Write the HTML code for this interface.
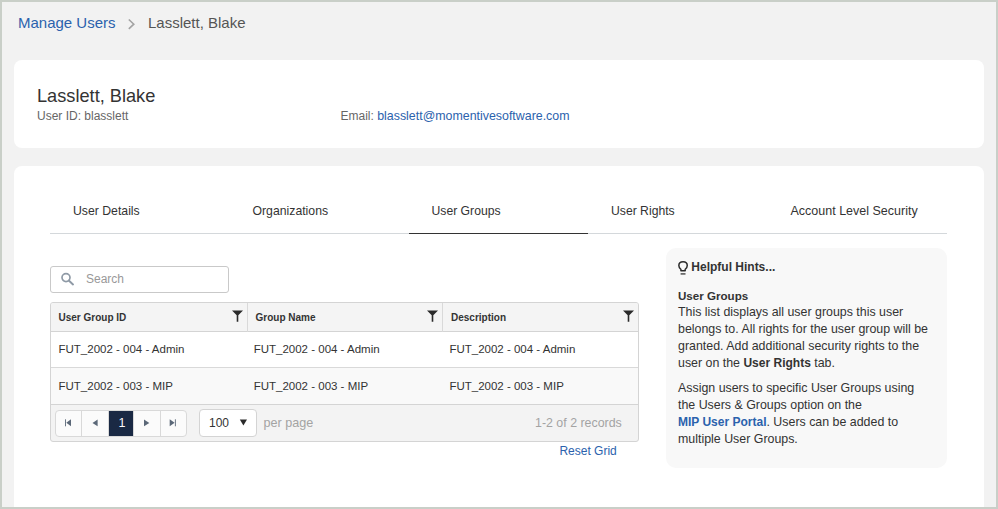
<!DOCTYPE html>
<html><head><meta charset="utf-8">
<style>
*{margin:0;padding:0;box-sizing:border-box}
html,body{width:998px;height:509px;overflow:hidden}
body{font-family:"Liberation Sans",sans-serif;background:#c9cfc8;position:relative;color:#333}
.a{position:absolute;white-space:nowrap}
#page{position:absolute;left:2px;top:2px;width:994px;height:505px;background:#f2f2f2;overflow:hidden}
.card{position:absolute;background:#fff;border-radius:8px}
.link{color:#2b62ad}
.tab{position:absolute;top:205px;font-size:12.5px;line-height:12.5px;color:#333}
.th{font-size:10px;line-height:10px;font-weight:bold;color:#333}
.td{font-size:11.5px;line-height:11.5px;color:#333}
.hint{font-size:12.4px;line-height:17px;color:#333}
.hint b{font-size:12px}
</style></head><body>
<div id="page"></div>

<!-- breadcrumb -->
<div class="a link" style="left:18px;top:15.3px;font-size:15px;line-height:15px">Manage Users</div>
<svg class="a" style="left:127px;top:18px" width="10" height="12" viewBox="0 0 10 12"><path d="M1.8 1.5 L6.8 6.2 L1.8 10.9" fill="none" stroke="#a3a3a3" stroke-width="1.6"/></svg>
<div class="a" style="left:148px;top:15.3px;font-size:15px;line-height:15px;color:#555">Lasslett, Blake</div>

<!-- top card -->
<div class="card" style="left:14px;top:60px;width:970px;height:88px"></div>
<div class="a" style="left:37px;top:86.8px;font-size:18.2px;line-height:18px;color:#333">Lasslett, Blake</div>
<div class="a" style="left:37px;top:109.8px;font-size:12px;line-height:12px;color:#666">User ID: blasslett</div>
<div class="a" style="left:340.5px;top:109.8px;font-size:12px;line-height:12px;color:#666">Email: <span class="link" style="font-size:12.4px">blasslett@momentivesoftware.com</span></div>

<!-- main card -->
<div class="card" style="left:14px;top:166px;width:970px;height:360px"></div>

<!-- tabs -->
<div class="a" style="left:50px;top:233px;width:897px;height:1px;background:#d4d8db"></div>
<div class="a" style="left:409px;top:233px;width:179px;height:1px;background:#333"></div>
<div class="tab a" style="left:73px;font-size:12.25px">User Details</div>
<div class="tab a" style="left:252.5px;font-size:12.25px">Organizations</div>
<div class="tab a" style="left:431.5px;font-size:12.2px">User Groups</div>
<div class="tab a" style="left:611px;font-size:12.2px">User Rights</div>
<div class="tab a" style="left:790.5px">Account Level Security</div>

<!-- search -->
<div class="a" style="left:50px;top:266px;width:179px;height:27px;border:1px solid #c9c9c9;border-radius:3px;background:#fff"></div>
<svg class="a" style="left:60px;top:272px" width="16" height="14" viewBox="0 0 16 14"><circle cx="6" cy="5.6" r="4" fill="none" stroke="#8f9aa6" stroke-width="1.7"/><path d="M8.8 8.6 L13 12.4" stroke="#8f9aa6" stroke-width="2" stroke-linecap="round"/></svg>
<div class="a" style="left:86px;top:272.8px;font-size:12px;line-height:12px;color:#999">Search</div>

<!-- table -->
<div class="a" style="left:50px;top:302px;width:589px;height:140px;border:1px solid #d4d4d4;border-radius:3px;background:#f3f3f3;overflow:hidden">
  <div class="a" style="left:0;top:0;width:587px;height:29px;background:#f4f4f4;border-bottom:1px solid #d4d4d4"></div>
  <div class="a" style="left:0;top:29px;width:587px;height:36px;background:#fff;border-bottom:1px solid #d9d9d9"></div>
  <div class="a" style="left:0;top:65px;width:587px;height:37px;background:#f9f9f9;border-bottom:1px solid #d4d4d4"></div>
  <div class="a" style="left:196px;top:0;width:1px;height:29px;background:#d9d9d9"></div>
  <div class="a" style="left:391px;top:0;width:1px;height:29px;background:#d9d9d9"></div>
</div>
<div class="a th" style="left:58.5px;top:313px">User Group ID</div>
<div class="a th" style="left:255.5px;top:313px">Group Name</div>
<div class="a th" style="left:451px;top:313px">Description</div>
<svg class="a" style="left:231px;top:310px" width="13" height="13" viewBox="0 0 13 13"><path d="M1 0.5 H12 L7.3 5.2 V11.7 H5.7 V5.2 Z" fill="#2a2a2a"/></svg>
<svg class="a" style="left:426px;top:310px" width="13" height="13" viewBox="0 0 13 13"><path d="M1 0.5 H12 L7.3 5.2 V11.7 H5.7 V5.2 Z" fill="#2a2a2a"/></svg>
<svg class="a" style="left:622px;top:310px" width="13" height="13" viewBox="0 0 13 13"><path d="M1 0.5 H12 L7.3 5.2 V11.7 H5.7 V5.2 Z" fill="#2a2a2a"/></svg>

<div class="a td" style="left:58.5px;top:343.7px">FUT_2002 - 004 - Admin</div>
<div class="a td" style="left:253.7px;top:343.7px">FUT_2002 - 004 - Admin</div>
<div class="a td" style="left:449.4px;top:343.7px">FUT_2002 - 004 - Admin</div>
<div class="a td" style="left:58.5px;top:381.2px">FUT_2002 - 003 - MIP</div>
<div class="a td" style="left:253.7px;top:381.2px">FUT_2002 - 003 - MIP</div>
<div class="a td" style="left:449.4px;top:381.2px">FUT_2002 - 003 - MIP</div>

<!-- pager -->
<div class="a" style="left:55px;top:410px;width:132px;height:27px;border:1px solid #d9d9d9;border-radius:4px;background:#fbfbfb;overflow:hidden">
  <div class="a" style="left:25px;top:0;width:1px;height:25px;background:#d9d9d9"></div>
  <div class="a" style="left:52px;top:0;width:1px;height:25px;background:#d9d9d9"></div>
  <div class="a" style="left:53px;top:0;width:24px;height:25px;background:#1a2944"></div>
  <div class="a" style="left:77px;top:0;width:1px;height:25px;background:#d9d9d9"></div>
  <div class="a" style="left:104px;top:0;width:1px;height:25px;background:#d9d9d9"></div>
</div>
<div class="a" style="left:118.5px;top:416.6px;font-size:12.5px;line-height:12.5px;color:#fafafa">1</div>
<svg class="a" style="left:64px;top:419px" width="9" height="8" viewBox="0 0 9 8"><rect x="1.1" y="0.3" width="0.9" height="7" fill="#5b6878"/><path d="M7 0.3 V7.3 L2.3 3.8 Z" fill="#5b6878"/></svg>
<svg class="a" style="left:91px;top:419px" width="8" height="8" viewBox="0 0 8 8"><path d="M6.6 0.5 V7.3 L1.5 3.9 Z" fill="#5b6878"/></svg>
<svg class="a" style="left:143px;top:419px" width="8" height="8" viewBox="0 0 8 8"><path d="M1 0.5 V7.3 L6.3 3.9 Z" fill="#5b6878"/></svg>
<svg class="a" style="left:169px;top:419px" width="9" height="8" viewBox="0 0 9 8"><path d="M0.7 0.3 V7.3 L5.6 3.8 Z" fill="#5b6878"/><rect x="5.9" y="0.3" width="0.9" height="7" fill="#5b6878"/></svg>

<div class="a" style="left:199px;top:409px;width:58px;height:28px;border:1px solid #d4d4d4;border-radius:4px;background:#fff"></div>
<div class="a" style="left:209px;top:416.8px;font-size:12px;line-height:12px;color:#333">100</div>
<svg class="a" style="left:238.5px;top:419px" width="9" height="8" viewBox="0 0 9 8"><path d="M0.8 0.6 H8 L4.4 6.6 Z" fill="#2a2a2a"/></svg>
<div class="a" style="left:263.5px;top:416.8px;font-size:12.6px;line-height:12px;color:#a3a3a3">per page</div>
<div class="a" style="left:535px;top:417.2px;font-size:12.4px;line-height:12px;color:#a3a3a3">1-2 of 2 records</div>
<div class="a link" style="left:559.4px;top:444.5px;font-size:12px;line-height:12px">Reset Grid</div>

<!-- hints -->
<div class="a" style="left:666px;top:248px;width:281px;height:220px;background:#f8f8f8;border-radius:10px"></div>
<svg class="a" style="left:677px;top:260px" width="13" height="16" viewBox="0 0 13 16"><path d="M3.9 10.75 V9.3 C2.5 8.4 1.85 7.1 1.85 5.6 C1.85 3.3 3.7 1.75 6.05 1.75 C8.4 1.75 10.25 3.3 10.25 5.6 C10.25 7.1 9.6 8.4 8.2 9.3 V10.75 Z" fill="none" stroke="#2b2b2b" stroke-width="1.5" stroke-linejoin="round"/><rect x="3.6" y="13.1" width="4.9" height="1.6" fill="#5a5a5a"/></svg>
<div class="a" style="left:691.3px;top:260.6px;font-size:12px;line-height:12px;font-weight:bold;color:#333">Helpful Hints...</div>
<div class="a" style="left:678px;top:290.4px;font-size:11.6px;line-height:12px;font-weight:bold;color:#333">User Groups</div>
<div class="a hint" style="left:678px;top:304px">This list displays all user groups this user<br>belongs to. All rights for the user group will be<br>granted. Add additional security rights to the<br>user on the <b>User Rights</b> tab.</div>
<div class="a hint" style="left:678px;top:380.2px">Assign users to specific User Groups using<br>the Users &amp; Groups option on the<br><b class="link">MIP User Portal</b>. Users can be added to<br>multiple User Groups.</div>

<!-- outer frame border -->
<div class="a" style="left:0;top:0;width:998px;height:509px;border:2px solid #c9cfc8;pointer-events:none"></div>
</body></html>
